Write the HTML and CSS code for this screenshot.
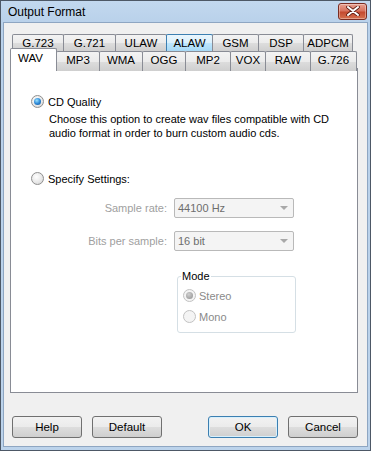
FILE: index.html
```html
<!DOCTYPE html>
<html lang="en">
<head>
    <meta charset="UTF-8">
    <title>Output Format</title>
    <link rel="stylesheet" href="styles.css">
</head>
<body>

<div class="window">
    <div class="titlebar">
        <span class="title">Output Format</span>
        <div class="close-btn">
            <svg width="14" height="10" viewBox="0 0 14 10">
                <path d="M2 1 L12 9 M12 1 L2 9" stroke="#5a1a10" stroke-width="3.6" stroke-linecap="round"/>
                <path d="M2 1 L12 9 M12 1 L2 9" stroke="#ffffff" stroke-width="2" stroke-linecap="round"/>
            </svg>
        </div>
    </div>

    <div class="client">
        <div class="tabs">
            <div class="tab-row back">
                <div class="tab">G.723</div>
                <div class="tab">G.721</div>
                <div class="tab">ULAW</div>
                <div class="tab hover">ALAW</div>
                <div class="tab">GSM</div>
                <div class="tab">DSP</div>
                <div class="tab">ADPCM</div>
            </div>
            <div class="tab-row front">
                <div class="tab active">WAV</div>
                <div class="tab">MP3</div>
                <div class="tab">WMA</div>
                <div class="tab">OGG</div>
                <div class="tab">MP2</div>
                <div class="tab">VOX</div>
                <div class="tab">RAW</div>
                <div class="tab">G.726</div>
            </div>
        </div>

        <div class="panel">
            <label class="option">
                <span class="radio checked"></span>
                <span>CD Quality</span>
            </label>
            <p class="desc">Choose this option to create wav files compatible with CD audio format in order to burn custom audio cds.</p>

            <label class="option specify">
                <span class="radio"></span>
                <span>Specify Settings:</span>
            </label>

            <div class="settings">
                <div class="field">
                    <span class="field-label">Sample rate:</span>
                    <div class="combo"><span>44100 Hz</span><span class="arrow"></span></div>
                </div>
                <div class="field">
                    <span class="field-label">Bits per sample:</span>
                    <div class="combo"><span>16 bit</span><span class="arrow"></span></div>
                </div>
            </div>

            <fieldset class="mode">
                <legend>Mode</legend>
                <div class="mode-opt">
                    <span class="radio checked disabled"></span>
                    <span>Stereo</span>
                </div>
                <div class="mode-opt">
                    <span class="radio disabled"></span>
                    <span>Mono</span>
                </div>
            </fieldset>
        </div>

        <div class="buttons">
            <div class="left-btns">
                <button class="btn">Help</button>
                <button class="btn">Default</button>
            </div>
            <div class="right-btns">
                <button class="btn default">OK</button>
                <button class="btn">Cancel</button>
            </div>
        </div>
    </div>
</div>

</body>
</html>
```

FILE: styles.css
```css
body {
    margin: 0;
    padding: 0;
    font-family: "Liberation Sans", Arial, sans-serif;
    font-size: 11px;
    color: #000;
}
.window {
    width: 371px;
    height: 451px;
    box-sizing: border-box;
    border: 1px solid #4d5866;
    background: linear-gradient(to bottom, #c2d8ef 0px, #b9d1ea 22px, #bcd3eb 100%);
    display: flex;
    flex-direction: column;
}
.titlebar {
    height: 21px;
    display: flex;
    align-items: center;
    justify-content: space-between;
    padding: 0 3px 0 7px;
}
.title {
    font-size: 12px;
    color: #000;
    margin-top: 1px;
}
.close-btn {
    width: 27px;
    height: 15px;
    margin-top: -1px;
    border: 1px solid #7a2c22;
    border-radius: 3px;
    background: linear-gradient(to bottom, #e8a192 0%, #d7735f 45%, #c44a30 55%, #d5714f 100%);
    display: flex;
    align-items: center;
    justify-content: center;
    box-shadow: inset 0 0 0 1px rgba(255,255,255,0.35);
}
.client {
    flex: 1;
    margin: 0 2px 3px;
    border: 1px solid #8ea6c2;
    background: #f0f0f0;
    display: flex;
    flex-direction: column;
    padding: 0 9px 0 6px;
}
.tabs {
    padding-top: 11px;
    position: relative;
}
.tab-row {
    display: grid;
    height: 17px;
}
.tab-row.back {
    margin-left: 2px;
    margin-right: 2px;
    grid-template-columns: 51px 52px 51px 46px 46px 45px 49px;
}
.tab-row.front {
    grid-template-columns: 46px 43px 43px 43px 45px 35px 45px 46px;
    position: relative;
    z-index: 1;
}
.tab {
    border: 1px solid #898c95;
    border-bottom: none;
    margin-right: -1px;
    background: linear-gradient(to bottom, #f3f3f3 0%, #ebebeb 50%, #dddddd 51%, #cfcfcf 100%);
    text-align: center;
    line-height: 16px;
    font-size: 11.5px;
    border-radius: 2px 2px 0 0;
}
.tab.hover {
    border-color: #3c7fb1;
    background: linear-gradient(to bottom, #eaf6fd 0%, #d9f0fc 50%, #bee6fd 51%, #a7d9f5 100%);
}
.tab.active {
    background: #fff;
    margin-top: -3px;
    height: 22px;
    line-height: 19px;
    text-align: left;
    padding-left: 7px;
    position: relative;
    z-index: 2;
}
.panel {
    height: 325px;
    box-sizing: border-box;
    background: #fff;
    border: 1px solid #898c95;
    padding: 26px 0 0 20px;
}
.option {
    display: flex;
    align-items: center;
    gap: 4px;
    height: 13px;
}
.radio {
    width: 11px;
    height: 11px;
    border-radius: 50%;
    border: 1px solid #8f8f8f;
    background: radial-gradient(circle at 40% 35%, #ffffff 0%, #e6e6e6 60%, #cbcbcb 100%);
    position: relative;
    flex-shrink: 0;
}
.radio.checked::after {
    content: "";
    position: absolute;
    left: 2px;
    top: 2px;
    width: 7px;
    height: 7px;
    border-radius: 50%;
    background: radial-gradient(circle at 40% 35%, #9be3ff 0%, #2f8ad8 50%, #0d4e8e 100%);
}
.radio.disabled {
    border-color: #c2c2c2;
    background: #f4f4f4;
}
.radio.checked.disabled::after {
    background: radial-gradient(circle at 40% 35%, #d0d0d0 0%, #a8a8a8 60%, #8c8c8c 100%);
}
.desc {
    margin: 4px 0 0 18px;
    width: 300px;
    line-height: 14px;
}
.specify {
    margin-top: 32px;
}
.settings {
    margin-top: 13px;
    display: flex;
    flex-direction: column;
    gap: 13px;
}
.field {
    display: flex;
    align-items: center;
}
.field-label {
    width: 136px;
    text-align: right;
    color: #a0a0a0;
    margin-right: 7px;
}
.combo {
    width: 120px;
    height: 20px;
    box-sizing: border-box;
    border: 1px solid #b9b9b9;
    border-radius: 2px;
    background: #f4f4f4;
    color: #6d6d6d;
    display: flex;
    align-items: center;
    justify-content: space-between;
    padding: 0 5px 0 3px;
}
.arrow {
    width: 0;
    height: 0;
    border-left: 4px solid transparent;
    border-right: 4px solid transparent;
    border-top: 4px solid #a8a8a8;
}
.mode {
    margin: 19px 0 0 146px;
    width: 119px;
    height: 63px;
    box-sizing: border-box;
    border: 1px solid #d5dfe5;
    border-radius: 3px;
    padding: 3px 0 0 5px;
}
.mode legend {
    padding: 0 1px;
    margin-left: -2px;
}
.mode-opt {
    display: flex;
    align-items: center;
    gap: 3px;
    color: #8a8a8a;
    height: 21px;
}
.buttons {
    display: flex;
    justify-content: space-between;
    margin-top: 23px;
    padding: 0 0 0 2px;
}
.left-btns, .right-btns {
    display: flex;
    gap: 10px;
}
.btn {
    width: 70px;
    height: 22px;
    font-family: "Liberation Sans", Arial, sans-serif;
    font-size: 11.5px;
    border: 1px solid #707070;
    border-radius: 3px;
    background: linear-gradient(to bottom, #f2f2f2 0%, #ebebeb 50%, #dddddd 51%, #cfcfcf 100%);
    padding: 0;
    color: #000;
}
.btn.default {
    border-color: #3c7fb1;
    box-shadow: inset 0 0 0 1px #d8f0fc;
}
```
